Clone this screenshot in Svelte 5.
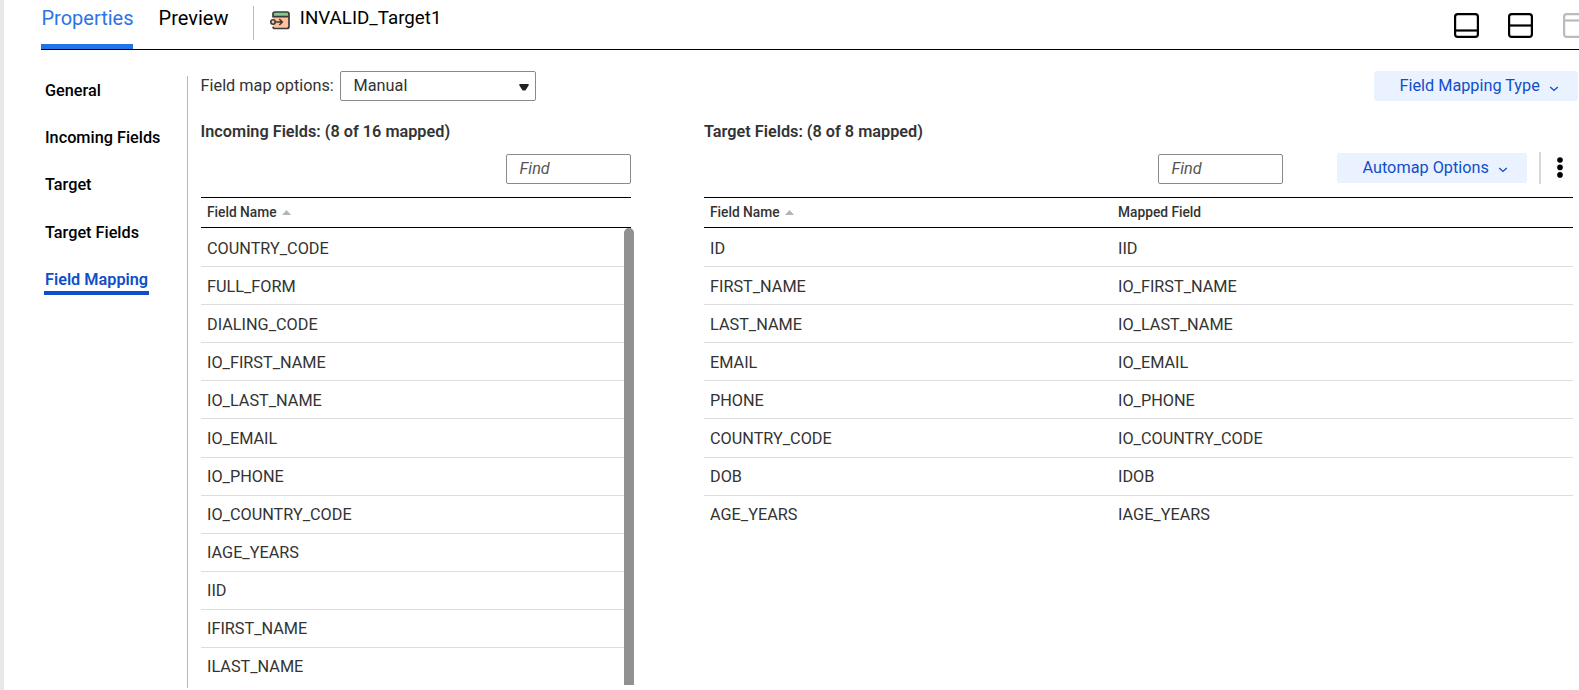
<script>
  const sections = ['General', 'Incoming Fields', 'Target', 'Target Fields', 'Field Mapping'];
  const incoming = [
    'COUNTRY_CODE', 'FULL_FORM', 'DIALING_CODE', 'IO_FIRST_NAME', 'IO_LAST_NAME', 'IO_EMAIL',
    'IO_PHONE', 'IO_COUNTRY_CODE', 'IAGE_YEARS', 'IID', 'IFIRST_NAME', 'ILAST_NAME'
  ];
  const mappings = [
    ['ID', 'IID'],
    ['FIRST_NAME', 'IO_FIRST_NAME'],
    ['LAST_NAME', 'IO_LAST_NAME'],
    ['EMAIL', 'IO_EMAIL'],
    ['PHONE', 'IO_PHONE'],
    ['COUNTRY_CODE', 'IO_COUNTRY_CODE'],
    ['DOB', 'IDOB'],
    ['AGE_YEARS', 'IAGE_YEARS']
  ];
</script>

{#snippet chevron()}
  <svg class="chevron" width="10" height="6" viewBox="0 0 10 6"><path d="M1.2 1 5 4.4 8.8 1" fill="none" stroke="currentColor" stroke-width="1.4" /></svg>
{/snippet}

{#snippet sortMark()}
  <svg class="sort" width="9" height="5" viewBox="0 0 9 5"><path d="M0 5 4.5 0 9 5Z" fill="#b4b4b4" /></svg>
{/snippet}

<div class="panel">
  <header>
    <nav class="tabs">
      <span class="tab active">Properties</span>
      <span class="tab">Preview</span>
    </nav>
    <div class="title">
      <svg width="20" height="19" viewBox="0 0 20 19">
        <rect x="3" y="1.2" width="16" height="16.3" rx="2" fill="#ffc09a" />
        <path d="M3 6V3Q3 1.2 4.8 1.2H17.2Q19 1.2 19 3V6Z" fill="#7fcb8a" />
        <path d="M3 6.5V3Q3 1 5 1H17Q19 1 19 3V15.5Q19 17.5 17 17.5H5Q3 17.5 3 15.8M3 5.6H19" fill="none" stroke="#3a3a3c" stroke-width="1.7" />
        <circle cx="3" cy="11" r="2.2" fill="#ffc09a" stroke="#3a3a3c" stroke-width="1.6" />
        <path d="M5.2 11H12M9.3 8 12.3 11 9.3 14" fill="none" stroke="#3a3a3c" stroke-width="1.6" />
      </svg>
      <span>INVALID_Target1</span>
    </div>
    <div class="layouts">
      <svg width="25" height="25" viewBox="0 0 25 25" fill="none" stroke="#000" stroke-width="2.2"><rect x="1.1" y="1.1" width="22.8" height="22.8" rx="2.6" /><path d="M1 17.5H24" /></svg>
      <svg width="25" height="25" viewBox="0 0 25 25" fill="none" stroke="#000" stroke-width="2.2"><rect x="1.1" y="1.1" width="22.8" height="22.8" rx="2.6" /><path d="M1 12.5H24" /></svg>
      <svg class="off" width="25" height="25" viewBox="0 0 25 25" fill="none" stroke="#bbb" stroke-width="2.2"><rect x="1.1" y="1.1" width="22.8" height="22.8" rx="2.6" /><path d="M1 7.5H24" /></svg>
    </div>
  </header>

  <div class="body">
    <aside>
      {#each sections as name}
        <span class="section" class:current={name === 'Field Mapping'}>{name}</span>
      {/each}
    </aside>

    <main>
      <div class="options">
        <span class="label">Field map options:</span>
        <div class="select">
          <span>Manual</span>
          <svg width="10" height="8" viewBox="0 0 10 8"><path d="M.4 1H9.6V2.6L6.4 7.4H3.6L.4 2.6Z" fill="#222" /></svg>
        </div>
        <div class="button type">Field Mapping Type{@render chevron()}</div>
      </div>

      <div class="tables">
        <section class="left">
          <h2>Incoming Fields: (8 of 16 mapped)</h2>
          <div class="tools"><div class="find">Find</div></div>
          <div class="head"><span>Field Name</span>{@render sortMark()}</div>
          <div class="scroller">
            <div class="rows">
              {#each incoming as field}
                <div class="row"><span>{field}</span></div>
              {/each}
            </div>
            <div class="bar"></div>
          </div>
        </section>

        <section class="right">
          <h2>Target Fields: (8 of 8 mapped)</h2>
          <div class="tools">
            <div class="find">Find</div>
            <div class="button automap">Automap Options{@render chevron()}</div>
            <div class="rule"></div>
            <svg class="dots" width="6" height="21" viewBox="0 0 6 21"><circle cx="3" cy="3" r="2.8" /><circle cx="3" cy="10.4" r="2.8" /><circle cx="3" cy="17.9" r="2.8" /></svg>
          </div>
          <div class="head"><div class="cell"><span>Field Name</span>{@render sortMark()}</div><span>Mapped Field</span></div>
          <div class="rows">
            {#each mappings as [target, source]}
              <div class="row"><span class="cell">{target}</span><span>{source}</span></div>
            {/each}
          </div>
        </section>
      </div>
    </main>
  </div>
</div>

<style>
  :global(body) { overflow: hidden; }
  .panel {
    box-sizing: border-box;
    width: 1579px;
    height: 690px;
    padding-left: 37px;
    border-left: 4px solid #dfdfdf;
    border-image: linear-gradient(to right, #e8e8e8, #e4e4e4 50%, #cfcfcf) 1;
    border-width: 0 0 0 4px;
    background: #fff;
    overflow: hidden;
    font-family: Roboto, sans-serif;
    font-size: 16.25px;
    color: #333;
    white-space: nowrap;
  }
  header {
    box-sizing: border-box;
    display: flex;
    height: 50px;
    border-bottom: 1px solid #000;
    color: #000;
  }
  .tabs { display: flex; gap: 25.6px; font-size: 20px; }
  .tab { box-sizing: border-box; height: 49px; padding-top: 6px; line-height: 24px; }
  .active { width: 92px; padding-left: .5px; color: #2b73e8; border-bottom: 5px solid #2272ea; }
  .title {
    display: flex;
    height: 34px;
    margin: 6px 0 0 24.4px;
    padding-left: 16px;
    border-left: 1px solid #bbb;
    font-size: 18.75px;
    line-height: 24px;
  }
  .title svg { margin: 5px 10px 0 0; }
  .layouts { display: flex; gap: 29px; width: 125px; margin: 13px 0 0 auto; }
  .layouts svg { flex: none; }
  .layouts .off { margin-left: 1px; }

  .body { display: flex; }
  aside {
    box-sizing: border-box;
    width: 147px;
    height: 612px;
    margin-top: 26px;
    padding: 2px 0 0 3px;
    border-right: 1px solid #b8b8b8;
    display: flex;
    flex-direction: column;
    align-items: flex-start;
    gap: 19.2px;
    font-weight: 500;
    color: #000;
  }
  .section { height: 28px; line-height: 25px; padding: 0 .6px 0 1px; }
  .current { box-sizing: border-box; font-weight: 600; color: #104fc9; border-bottom: 4px solid #104fc9; }

  main { flex: 1; padding: 21px 0 0 12.6px; }
  .options { display: flex; height: 30px; line-height: 29px; }
  .label { width: 139px; }
  .select {
    box-sizing: border-box;
    display: flex;
    justify-content: space-between;
    align-items: center;
    width: 196px;
    border: 1px solid #8a8a8a;
    border-radius: 2px;
    padding: 0 6px 0 13px;
  }
  .select span { line-height: 28px; }
  .select svg { margin-top: 2px; }
  .button {
    box-sizing: border-box;
    height: 30px;
    padding-left: 25.5px;
    border-radius: 3px;
    background: #ebf2ff;
    color: #104fc9;
    line-height: 29px;
  }
  .chevron { margin-left: 9.5px; }
  .type .chevron { transform: translateY(1px); }
  .type { width: 204px; margin: 0 1px 0 auto; }

  .tables { display: flex; }
  h2 { margin: 18px 0 0; height: 25px; font-size: 16.25px; line-height: 25px; font-weight: 600; }
  .left { width: 430px; margin-right: 73.4px; }
  .right { width: 869px; }
  .tools { display: flex; height: 53px; }
  .find {
    box-sizing: border-box;
    width: 125px;
    height: 30px;
    margin-top: 10px;
    padding-left: 12.5px;
    border: 1px solid #8a8a8a;
    border-radius: 2px;
    line-height: 27px;
    font-style: italic;
    color: #555;
  }
  .left .find { margin-left: 305px; padding-left: 13px; }
  .right .find { margin-left: 454px; }
  .automap { width: 190px; margin: 9px 0 0 54px; }
  .rule { width: 2px; height: 32px; margin: 8px 0 0 12px; background: #d8d8d8; }
  .dots { margin: 13px 0 0 16px; }
  .head {
    box-sizing: border-box;
    display: flex;
    align-items: center;
    height: 31px;
    padding: 0 0 1px 6px;
    border: solid #000;
    border-width: 1px 0;
    font-size: 13.75px;
    line-height: 18px;
    font-weight: 500;
  }
  .left .head, .left .row { padding-left: 6.4px; }
  .sort { margin: 1px 0 0 5px; }
  .cell { display: flex; align-items: center; width: 408px; }
  .scroller { display: flex; height: 457px; width: 433px; overflow: hidden; }
  .left .rows { width: 423px; }
  .rows { padding-top: 1.25px; }
  .row {
    box-sizing: border-box;
    display: flex;
    height: 38.05px;
    padding: .35px 0 0 6px;
    border-bottom: 1px solid #ddd;
    line-height: 38px;
  }
  .row .cell { display: block; }
  .left .row:last-child { border-bottom: 0; }
  .right .row:last-child { border-bottom: 0; }
  .bar { width: 10px; border-radius: 5px 5px 0 0; background: #919191; }
</style>
